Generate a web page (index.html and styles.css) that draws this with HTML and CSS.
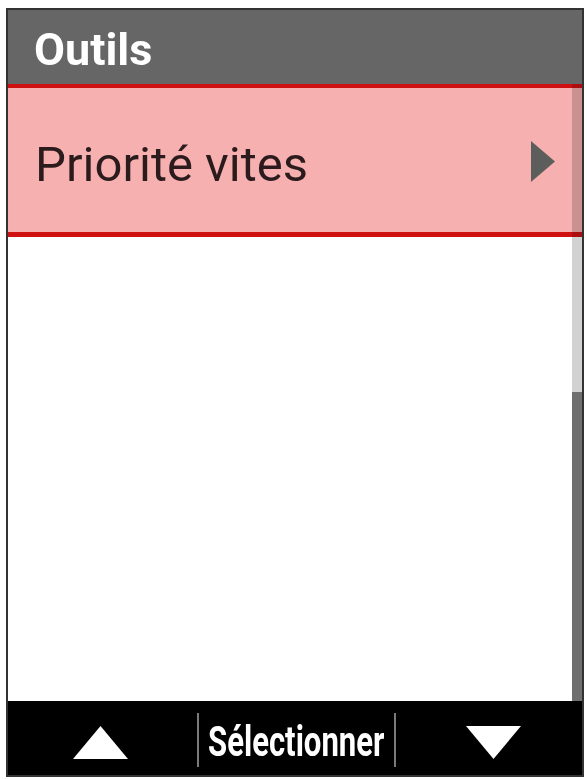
FILE: index.html
```html
<!DOCTYPE html>
<html lang="fr">
<head>
<meta charset="utf-8">
<title>Outils</title>
<link rel="stylesheet" href="styles.css">
</head>
<body>
<div class="device">
  <div class="header">Outils</div>
  <div class="main">
    <div class="row selected">
      <span class="label">Priorité vites</span>
      <svg class="chevron" width="24" height="41" viewBox="0 0 24 41"><polygon points="0,0 24,20.5 0,41" fill="#5c5e5c"/></svg>
    </div>
    <div class="scrollbar"><div class="thumb"></div></div>
  </div>
  <div class="footer">
    <div class="cell left">
      <svg width="55" height="33" viewBox="0 0 55 33"><polygon points="27.5,0 55,33 0,33" fill="#fff"/></svg>
    </div>
    <div class="sep"></div>
    <div class="cell mid"><span class="action">Sélectionner</span></div>
    <div class="sep"></div>
    <div class="cell right">
      <svg width="55" height="33" viewBox="0 0 55 33"><polygon points="0,0 55,0 27.5,33" fill="#fff"/></svg>
    </div>
  </div>
</div>
</body>
</html>
```

FILE: styles.css
```css
html, body {
  margin: 0;
  padding: 0;
  background: #ffffff;
}

.device {
  box-sizing: border-box;
  margin: 8px 0 0 6px;
  width: 578px;
  height: 769px;
  border: 2px solid #333333;
  display: flex;
  flex-direction: column;
  font-family: Roboto, "Liberation Sans", sans-serif;
  background: #ffffff;
}

.header {
  height: 74px;
  flex: none;
  background: #666666;
  color: #ffffff;
  font-weight: 700;
  font-size: 45px;
  line-height: 74px;
  padding: 3px 0 0 26px;
  box-sizing: border-box;
}

.main {
  flex: 1;
  position: relative;
  background: #ffffff;
}

.row {
  display: flex;
  align-items: center;
  justify-content: space-between;
  box-sizing: border-box;
  height: 153px;
  padding: 8px 27px 0 27px;
}

.selected {
  background: #f7b0b0;
  border-top: 4px solid #cf1010;
  border-bottom: 5px solid #cf1010;
}

.label {
  font-size: 49px;
  color: #2b1b1d;
  line-height: 1;
}

.chevron {
  display: block;
  margin-top: -6px;
}

.scrollbar {
  position: absolute;
  top: 0;
  bottom: 0;
  right: 0;
  width: 10px;
  background: #d2d2d2;
  mix-blend-mode: multiply;
}

.thumb {
  position: absolute;
  left: 0;
  right: 0;
  top: 308px;
  bottom: 0;
  background: #6f6f6f;
}

.footer {
  height: 74px;
  flex: none;
  background: #000000;
  display: flex;
}

.cell {
  display: flex;
  align-items: center;
  justify-content: center;
}

.cell svg {
  display: block;
}

.left {
  width: 189px;
  padding-right: 5px;
  box-sizing: border-box;
  padding-top: 8px;
}

.right {
  flex: 1;
  padding-left: 8px;
  padding-top: 8px;
}

.mid {
  width: 195px;
}

.sep {
  width: 2px;
  height: 54px;
  margin-top: 12px;
  background: #7a7a7a;
}

.action {
  display: inline-block;
  font-weight: 700;
  font-size: 42px;
  color: #ffffff;
  transform: scaleX(0.74);
  white-space: nowrap;
  margin-top: 6px;
}
```
